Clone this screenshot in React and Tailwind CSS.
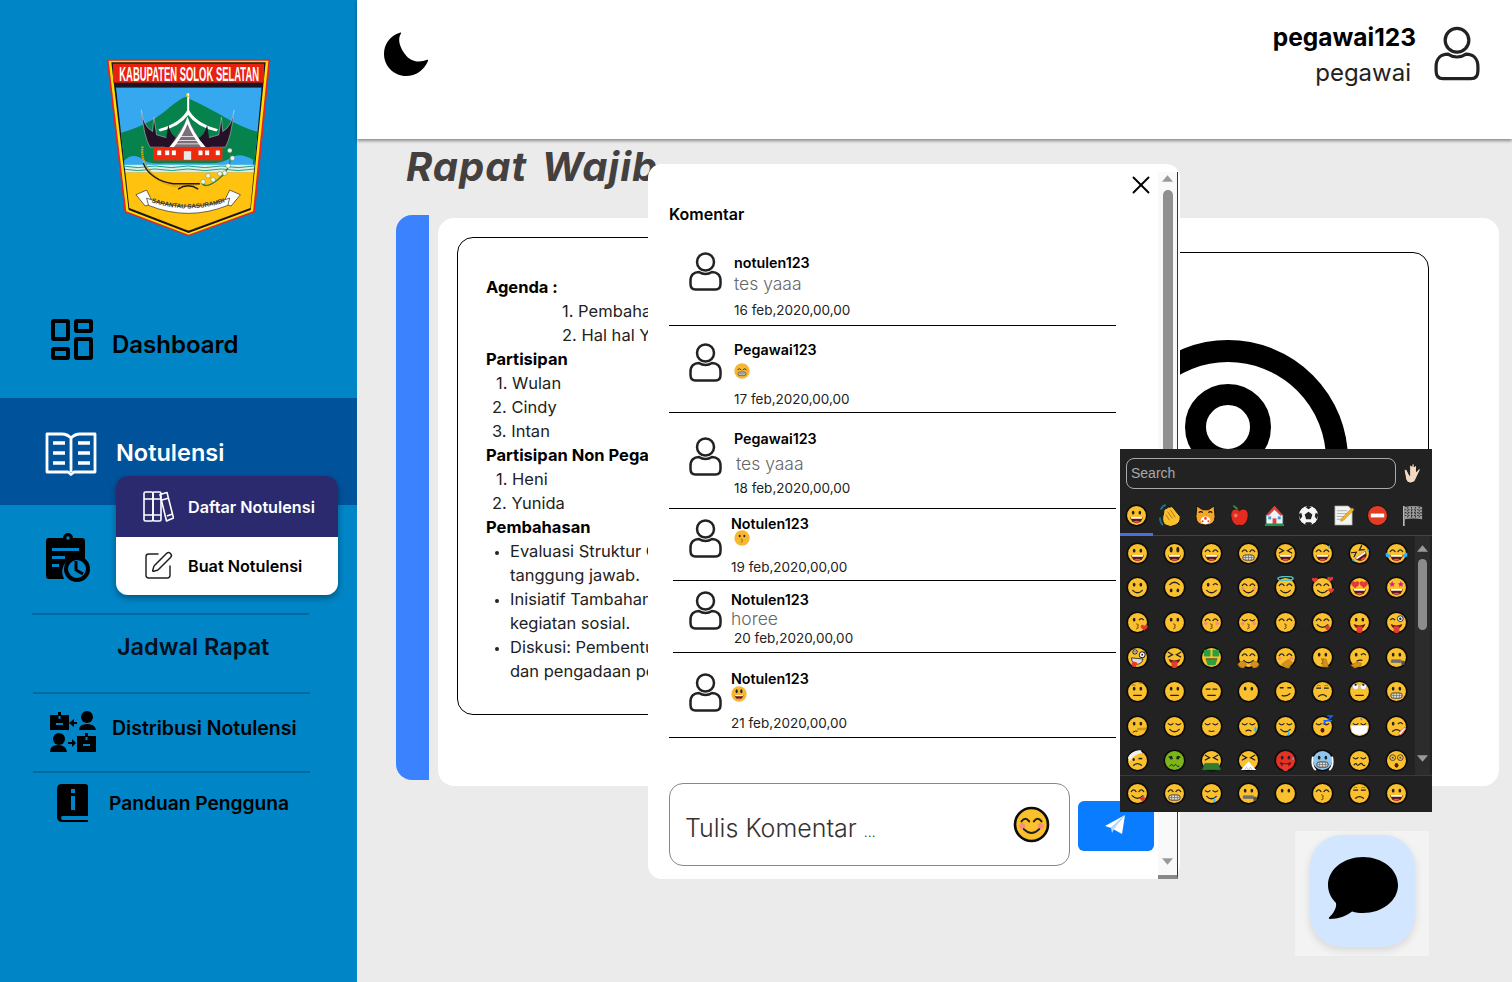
import { SquarePen, X } from "lucide-react";

/* ---------- emoji drawings ---------- */
const Dots = () => (
  <>
    <ellipse cx="8.5" cy="9" rx="1.4" ry="2" fill="#222" />
    <ellipse cx="15.5" cy="9" rx="1.4" ry="2" fill="#222" />
  </>
);
const BigEyes = () => (
  <>
    <ellipse cx="8.5" cy="8" rx="1.6" ry="3" fill="#222" />
    <ellipse cx="15.5" cy="8" rx="1.6" ry="3" fill="#222" />
  </>
);
const Arcs = () => (
  <path d="M5.5 10q2.5-3.5 5 0M13.5 10q2.5-3.5 5 0" fill="none" stroke="#222" strokeWidth="1.3" strokeLinecap="round" />
);
const Lids = () => (
  <path d="M5.5 9q2.5 2.5 5 0M13.5 9q2.5 2.5 5 0" fill="none" stroke="#222" strokeWidth="1.2" strokeLinecap="round" />
);
const XEyes = () => (
  <path d="M5.5 6.5l4.5 2.5-4.5 2.5M18.5 6.5L14 9l4.5 2.5" fill="none" stroke="#222" strokeWidth="1.3" strokeLinecap="round" />
);
const Open = () => (
  <>
    <path d="M5.5 13.5h13a6.5 6.5 0 0 1-13 0z" fill="#5c1616" />
    <path d="M6 13.5h12l-.5 2h-11z" fill="#fff" />
    <path d="M8.5 18.5q3.5-2 7 0q-3.5 2-7 0z" fill="#ef5350" />
  </>
);
const Smile = () => <path d="M7 15q5 5 10 0" fill="none" stroke="#222" strokeWidth="1.3" strokeLinecap="round" />;
const Flat = () => <path d="M8 16h8" stroke="#222" strokeWidth="1.3" strokeLinecap="round" />;
const Frown = () => <path d="M8 17q4-3.5 8 0" fill="none" stroke="#222" strokeWidth="1.3" strokeLinecap="round" />;
const Teeth = () => (
  <>
    <rect x="6" y="13.5" width="12" height="5.5" rx="2.7" fill="#ddd" stroke="#333" strokeWidth=".9" />
    <path d="M6.5 16.2h11M9 13.5v5.5M12 13.5v5.5M15 13.5v5.5" stroke="#555" strokeWidth=".6" />
  </>
);
const Kiss = () => (
  <path d="M11 13.5q3 .8 1 2.4q2 1.4-1 2.6" fill="none" stroke="#8a5a10" strokeWidth="1.2" strokeLinecap="round" />
);
const Blush = () => (
  <>
    <circle cx="6" cy="13" r="1.9" fill="#f48f7b" />
    <circle cx="18" cy="13" r="1.9" fill="#f48f7b" />
  </>
);
const Tongue = () => (
  <>
    <path d="M6 13.5q6 3 12 0q-1 5-6 5t-6-5z" fill="#5c1616" />
    <path d="M9 16h6v4a3 3 0 0 1-6 0z" fill="#e53935" />
  </>
);
const Wink = () => (
  <>
    <ellipse cx="8.5" cy="9" rx="1.4" ry="2" fill="#222" />
    <path d="M13.5 9.5q2.5-3 5 0" fill="none" stroke="#222" strokeWidth="1.3" />
  </>
);
const Hand = ({ d = "M6 22q-2-5 3-6l6-1q5 0 4 4l-3 4z" }) => <path d={d} fill="#d58f1c" stroke="#a86c10" strokeWidth=".6" />;
const Drop = ({ x = 19, y = 6 }) => <path d={`M${x} ${y}q2 2.6 0 3.8q-2-1.2 0-3.8z`} fill="#29b6f6" />;
const Heart = ({ x, y, c = "#e53935", s = 1 }) => (
  <path
    transform={`translate(${x} ${y}) scale(${s})`}
    d="M0-1.2C-1-3-3.6-2-3-.2C-2.6 1-1 2 0 3C1 2 2.6 1 3-.2C3.6-2 1-3 0-1.2z"
    fill={c}
  />
);
const Star = ({ x, y }) => <path transform={`translate(${x} ${y})`} d="M0-3.2L1-1 3.2-.8 1.4.8 2 3 0 1.8-2 3-1.4.8-3.2-.8-1-1z" fill="#d81b9a" />;
const Zip = () => (
  <>
    <rect x="6" y="14" width="12" height="3.6" rx="1" fill="#888" />
    <path d="M7.5 14v3.6M9.5 14v3.6M11.5 14v3.6M13.5 14v3.6M15.5 14v3.6" stroke="#333" strokeWidth=".6" />
    <rect x="17" y="15.5" width="3.5" height="4" fill="#555" />
  </>
);

const faces = {
  grin: <><Dots /><Open /></>,
  smiley: <><BigEyes /><Open /></>,
  smile: <><Arcs /><Open /></>,
  beam: <><Arcs /><Teeth /></>,
  laugh: <><XEyes /><Open /></>,
  sweat: <><Arcs /><Open /><Drop x={19} y={3} /></>,
  rofl: <g transform="rotate(-35 12 12)"><XEyes /><Open /><path d="M2 12q-1 3 1 4q2-2-1-4zM22 12q1 3-1 4q-2-2 1-4z" fill="#29b6f6" /></g>,
  joy: <><Arcs /><Open /><path d="M1 11q-1.5 5 3 5q2-1 1-3zM23 11q1.5 5-3 5q-2-1-1-3z" fill="#29b6f6" /></>,
  slight: <><Dots /><Smile /></>,
  upside: <g transform="rotate(180 12 12)"><Dots /><Smile /></g>,
  wink: <><Wink /><Smile /></>,
  blush: <><Arcs /><Blush /><Smile /></>,
  halo: <><Arcs /><Smile /><ellipse cx="12" cy="2.5" rx="8" ry="2" fill="none" stroke="#4fc3c7" strokeWidth="1.4" /></>,
  hearts: <><Arcs /><Smile /><Heart x={4} y={4} /><Heart x={20} y={3} /><Heart x={21} y={15} /></>,
  hearteyes: <><Heart x={7.5} y={8.5} s={1.4} /><Heart x={16.5} y={8.5} s={1.4} /><Open /></>,
  stars: <><Star x={7.5} y={8.5} /><Star x={16.5} y={8.5} /><Open /></>,
  kissheart: <><Wink /><Kiss /><Heart x={19} y={17} s={1.2} /></>,
  kiss: <><Dots /><Kiss /></>,
  kissblush: <><Arcs /><Blush /><Kiss /></>,
  kissclosed: <><Lids /><Blush /><Kiss /></>,
  kissarc: <><Arcs /><Kiss /></>,
  yum: <><Arcs /><path d="M6 14q6 6 12 0" fill="none" stroke="#222" strokeWidth="1.3" /><path d="M14 17l5-2.5 1 4-3 2z" fill="#e53935" /></>,
  tongue: <><Dots /><Tongue /></>,
  winktongue: <><path d="M5.5 9.5q2.5-3 5 0" fill="none" stroke="#222" strokeWidth="1.3" /><circle cx="16" cy="8" r="3" fill="#fff" stroke="#222" /><circle cx="16" cy="8" r="1.3" fill="#222" /><Tongue /></>,
  zany: <g transform="rotate(15 12 12)"><circle cx="8" cy="7" r="2.2" fill="#fff" stroke="#222" /><circle cx="16" cy="8" r="3" fill="#fff" stroke="#222" /><circle cx="16" cy="8" r="1" fill="#222" /><circle cx="8" cy="7" r=".8" fill="#222" /><path d="M6 14l12-2q0 6-5 7t-7-5z" fill="#ddd" stroke="#222" strokeWidth=".8" /><path d="M8 17h5v3a2.5 2.5 0 0 1-5 0z" fill="#e53935" /></g>,
  squint: <><XEyes /><Tongue /></>,
  money: <><rect x="4" y="4" width="7" height="7" rx="1" fill="#2e9e3a" /><rect x="13" y="4" width="7" height="7" rx="1" fill="#2e9e3a" /><path d="M6 14h12l-2 6H8z" fill="#2e9e3a" /><path d="M6 13.5h12" stroke="#222" /></>,
  hug: <><Arcs /><Smile /><Hand d="M1 19q2-4 6-3l3 3-3 4q-5 0-6-4zM23 19q-2-4-6-3l-3 3 3 4q5 0 6-4z" /></>,
  shy: <><Arcs /><Blush /><Hand d="M8 19l7-5 4 3-3 6q-5 1-8-4z" /></>,
  shush: <><Dots /><Kiss /><Hand d="M12 22l1-9 3 1 2 8z" /></>,
  think: <><Wink /><path d="M9 16q3-2 6-1" fill="none" stroke="#222" strokeWidth="1.2" /><Hand d="M3 20l6-3 5 1-1 3-6 2z" /></>,
  zip: <><Dots /><Zip /></>,
  brow: <><Dots /><path d="M6 5.5q2-1 4 0M14 3.5q2-1 4 0" fill="none" stroke="#a86c10" /><Flat /></>,
  neutral: <><Dots /><Flat /></>,
  blank: <><path d="M6 9.5h5M13 9.5h5" stroke="#222" strokeWidth="1.4" /><Flat /></>,
  nomouth: <Dots />,
  smirk: <><path d="M6 8h4M14 8h4" stroke="#222" strokeWidth="1.6" /><path d="M8 16q5 2 9-2" fill="none" stroke="#222" strokeWidth="1.3" /></>,
  unamused: <><path d="M5.5 8.5h5M13.5 8.5h5" stroke="#222" strokeWidth="1.4" /><path d="M6 6q2-1 4 0M14 6q2-1 4 0" fill="none" stroke="#a86c10" /><Frown /></>,
  roll: <><circle cx="8" cy="7" r="3.2" fill="#fff" stroke="#999" strokeWidth=".5" /><circle cx="16" cy="7" r="3.2" fill="#fff" stroke="#999" strokeWidth=".5" /><circle cx="8" cy="5" r="1.2" fill="#222" /><circle cx="16" cy="5" r="1.2" fill="#222" /><Flat /></>,
  grimace: <><Dots /><Teeth /></>,
  lying: <><Dots /><path d="M12 14l9-.5-1 2-8 0z" fill="#e6a21f" stroke="#a86c10" strokeWidth=".5" /><path d="M7 18q3-2 5-1" fill="none" stroke="#222" /></>,
  relieved: <><Lids /><Smile /></>,
  pensive: <><Lids /><path d="M9 16.5q3 1.5 6 0" fill="none" stroke="#222" strokeWidth="1.2" /></>,
  sleepy: <><Lids /><path d="M9 17q3-2.5 6 0" fill="none" stroke="#222" strokeWidth="1.2" /><path d="M19 12q3 4 .5 6q-3-2-.5-6z" fill="#29b6f6" /></>,
  drool: <><Lids /><Smile /><path d="M15 16q2 4 .5 6q-2-2-.5-6z" fill="#29b6f6" /></>,
  sleep: <><Lids /><ellipse cx="12" cy="16" rx="2" ry="2.4" fill="#5c1616" /><path d="M13 6h3l-3 3h3M17 1h5l-5 5h5" fill="none" stroke="#1e63ff" strokeWidth="1.4" /></>,
  mask: <><Lids /><path d="M3 11h18l-1 7q-4 3-8 3t-8-3z" fill="#fff" stroke="#ccc" strokeWidth=".5" /><Drop x={14} y={2} /></>,
  thermo: <><Wink /><Frown /><path d="M14 19l6-6 2 1-6 7z" fill="#eee" stroke="#e53935" strokeWidth=".7" /></>,
  bandage: <><path d="M2 9Q5 2 15 1l2 3Q8 6 4 13z" fill="#eee" /><path d="M13 10h4" stroke="#222" strokeWidth="1.6" /><ellipse cx="8" cy="11" rx="1.2" ry="1.6" fill="#222" /><Frown /></>,
  sick: <><path d="M6 8l4 2M18 8l-4 2" stroke="#222" strokeWidth="1.3" /><Dots /><path d="M7 18q1.5-3 3-1t2 0t2 0t3 1" fill="none" stroke="#222" /></>,
  vomit: <><XEyes /><path d="M5 15h14l3 7H2z" fill="#2e7d32" stroke="#1b4d1e" strokeWidth=".5" /></>,
  sneeze: <><XEyes /><path d="M12 13l8 9H4z" fill="#fff" /><path d="M8 22l2-3 2 3 2-3 2 3" stroke="#999" fill="none" strokeWidth=".6" /></>,
  hot: <><Dots /><Tongue /><Drop x={20} y={8} /></>,
  cold: <><Dots /><Teeth /><path d="M2 8q-2 10 3 14M22 8q2 10-3 14" fill="none" stroke="#fff" strokeWidth="2" /></>,
  woozy: <><Lids /><path d="M6 17q2-3 3-1t3 0t3 0t3 1" fill="none" stroke="#222" strokeWidth="1.2" /></>,
  dizzy: <><circle cx="8" cy="9" r="3" fill="none" stroke="#444" /><circle cx="16" cy="9" r="3" fill="none" stroke="#444" /><circle cx="8" cy="9" r="1" fill="#444" /><circle cx="16" cy="9" r="1" fill="#444" /><ellipse cx="12" cy="17" rx="2" ry="2.5" fill="#5c1616" /></>,
};

const fills = { sick: "#7cb518", hot: "#e53222", cold: "#8ec6ee" };

function Emoji({ name, size = "w-[23px] h-[23px]", plain = false }) {
  return (
    <svg viewBox="0 0 24 24" className={size}>
      <circle
        cx="12"
        cy="12"
        r={plain ? 11.5 : 10.7}
        fill={plain ? "#f7b733" : fills[name] || "#fbc02d"}
        stroke={plain ? "none" : "#0c0c0c"}
        strokeWidth="1.7"
      />
      {faces[name]}
    </svg>
  );
}

const tabIcons = {
  wave: (
    <>
      <path d="M22 13L14 3q-1.500-1-2.500.5l-1-.5q-1.500 0-2 1.500q-2-.5-2.500 1.500q-1.500.5-1 2.500L4 13q-1 6 3 9q5 3 10 0q6-3 5-9z" fill="#fbc02d" stroke="#111" strokeWidth="1" />
      <path d="M9 8l5 7M12 6l5 8M7 11l4 6" stroke="#a86c10" strokeWidth=".9" />
      <path d="M1 14q0 5 3 8M7 1Q3 2 2 6" fill="none" stroke="#1c6f86" strokeWidth="2" />
    </>
  ),
  cat: (
    <>
      <path d="M3 2l6 4h6l6-4 1 11q0 9-10 9T2 13z" fill="#f5a623" stroke="#111" strokeWidth="1" />
      <path d="M5 9q2-2 4 0M15 9q2-2 4 0" fill="none" stroke="#111" strokeWidth="1.3" />
      <ellipse cx="12" cy="17" rx="5" ry="4" fill="#fff" />
      <circle cx="12" cy="15" r="1.4" fill="#e53935" />
      <circle cx="9" cy="18" r="1" fill="#e53935" />
      <circle cx="15" cy="18" r="1" fill="#e53935" />
    </>
  ),
  apple: (
    <>
      <path d="M12 7C8 3 2 6 3 13q1 7 5 9q2 1 4 0q2 1 4 0q4-2 5-9C22 6 16 3 12 7z" fill="#e32b20" stroke="#111" strokeWidth=".8" />
      <path d="M11 6Q9 2 5 1q1 4 6 5z" fill="#2e9e3a" />
      <circle cx="8" cy="12" r="2" fill="#f27066" />
    </>
  ),
  house: (
    <>
      <path d="M12 2L3 12v9h18v-9z" fill="#eef3f6" stroke="#0b3d2c" strokeWidth="1" />
      <path d="M12 2L3 12h3l6-6 6 6h3z" fill="#e3403a" />
      <rect x="10" y="15" width="4" height="6" fill="#e3403a" />
      <rect x="5.5" y="13" width="3" height="3" fill="#3a9ce0" />
      <rect x="15.5" y="13" width="3" height="3" fill="#3a9ce0" />
      <rect x="2" y="21" width="20" height="2" fill="#1f9a4a" />
    </>
  ),
  soccer: (
    <>
      <circle cx="12" cy="12" r="10.5" fill="#f5f5f5" stroke="#111" strokeWidth="1" />
      <path d="M12 8l4 3-1.5 5h-5L8 11z" fill="#222" />
      <path d="M12 1.5l-3 2 3 2 3-2zM1.5 11l2 5 2-3-1-4zM22.500 11l-2 5-2-3 1-4zM8 21l4 1.500 4-1.500-1.500-2h-5z" fill="#222" />
    </>
  ),
  memo: (
    <>
      <path d="M3 2h14l4 4v16H3z" fill="#f4f4ee" stroke="#999" strokeWidth=".7" />
      <path d="M5 7h11M5 10h13M5 13h9M5 16h7" stroke="#9ab" strokeWidth=".9" />
      <path d="M21 4l2 2-11 11-3 1 1-3z" fill="#f5b324" stroke="#a86c10" strokeWidth=".5" />
    </>
  ),
  noentry: (
    <>
      <circle cx="12" cy="12" r="10.5" fill="#e23c25" stroke="#111" strokeWidth="1" />
      <rect x="5" y="10" width="14" height="4" fill="#fff" />
    </>
  ),
  flag: (
    <>
      <path d="M3 2v21" stroke="#ddd" strokeWidth="1.4" />
      <path d="M4 3q9-2 18 0v13q-9-2-18 0z" fill="#9a9a9a" />
      <path d="M4 6h18M4 9h18M4 12h18M7 3v13M11 3v13M15 3v13M19 3v13" stroke="#333" strokeWidth="1.1" strokeDasharray="1.6 1.6" />
    </>
  ),
  hand: (
    <>
      <path d="M6 8l3 6V4.500a1.200 1.200 0 0 1 2.400 0V3a1.200 1.200 0 0 1 2.400 0v2a1.200 1.200 0 0 1 2.400 0v5l2-2.500c1-1 2.400 0 1.600 1.300L15 19q-2 3-5 3q-4 0-5-4L3.400 9.500C3 8 5 7 6 8z" fill="#f4d9c2" stroke="#111" strokeWidth=".9" />
    </>
  ),
};

const TabIcon = ({ name, size = "w-[23px] h-[23px]" }) => (
  <svg viewBox="0 0 24 24" className={size}>
    {tabIcons[name]}
  </svg>
);

const gridEmoji = [
  "grin", "smiley", "smile", "beam", "laugh", "sweat", "rofl", "joy",
  "slight", "upside", "wink", "blush", "halo", "hearts", "hearteyes", "stars",
  "kissheart", "kiss", "kissblush", "kissclosed", "kissarc", "yum", "tongue", "winktongue",
  "zany", "squint", "money", "hug", "shy", "shush", "think", "zip",
  "brow", "neutral", "blank", "nomouth", "smirk", "unamused", "roll", "grimace",
  "lying", "relieved", "pensive", "sleepy", "drool", "sleep", "mask", "thermo",
  "bandage", "sick", "vomit", "sneeze", "hot", "cold", "woozy", "dizzy",
];
const lastRow = ["yum", "beam", "drool", "zip", "nomouth", "kissarc", "unamused", "grin"];

/* ---------- icons ---------- */
function Avatar({ className, stroke = 2.5 }) {
  return (
    <svg viewBox="0 0 33 39" fill="none" stroke="#222" strokeWidth={stroke} className={className}>
      <circle cx="16.5" cy="10" r="8.5" />
      <path d="M10 20C5 20 1.500 23 1.500 29v3c0 4 2 5.500 5 5.500h20c3 0 5-1.500 5-5.500v-3c0-6-3.500-9-8.500-9q-3 2-6.500 2T10 20z" />
    </svg>
  );
}

function Logo() {
  return (
    <svg viewBox="318 87 496 535" className="w-[165px] h-[178px]">
      <defs>
        <clipPath id="inner">
          <path d="M348 172H786L752 535 566 603 388 535z" />
        </clipPath>
        <path id="rib" d="M440 512Q565 560 690 512" />
      </defs>
      <path d="M320 88H812L766 548 566 620 374 548z" fill="#e3262b" />
      <path d="M326 92H806L760 545 566 615 379 545z" fill="#ffe000" />
      <path d="M334 97H798L753 541 566 610 386 541z" fill="#1b1523" />
      <rect x="339" y="101" width="454" height="57" fill="#e8210e" />
      <text x="358" y="154" textLength="420" lengthAdjust="spacingAndGlyphs" fontSize="58" fontWeight="700" fill="#fff" fontFamily="'Liberation Sans',sans-serif">
        KABUPATEN SOLOK SELATAN
      </text>
      <g clipPath="url(#inner)">
        <rect x="340" y="172" width="450" height="240" fill="#35a8f0" />
        <path d="M340 315Q440 290 500 240T565 205Q620 230 680 265T790 310V420H340z" fill="#06824d" />
        <path d="M370 395q30-30 60-5q20 15 60 10h140q40 0 60-15q30-20 70 5v30H370z" fill="#35a8f0" />
        <rect x="340" y="405" width="450" height="24" fill="#d8efe2" />
        <path d="M340 411q25-5 50 0t50 0 50 0 50 0 50 0 50 0 50 0 50 0 50 0M340 420q25-5 50 0t50 0 50 0 50 0 50 0 50 0 50 0 50 0 50 0" fill="none" stroke="#1f9f8e" strokeWidth="3" />
        <rect x="340" y="428" width="450" height="190" fill="#ffc20e" />
      </g>
      <path d="M565 190v50" stroke="#fff" strokeWidth="6" />
      <path d="M475 298Q545 280 565 235Q585 280 655 298L650 305Q590 290 565 255Q540 290 480 305z" fill="#fff" />
      <path d="M562 190a6 6 0 1 0 8 6a5 5 0 0 1-8-6z" fill="#e8c020" />
      <path d="M424 240Q432 320 450 352H515L505 325 470 315 462 262 458 305Q430 290 424 240z" fill="#251027" stroke="#d8d8d8" strokeWidth="1.5" />
      <path d="M703 240Q695 320 677 352H612L622 325 657 315 665 262 669 305Q697 290 703 240z" fill="#251027" stroke="#d8d8d8" strokeWidth="1.5" />
      <path d="M505 285q8 35 30 40l-15 27h-25z" fill="#251027" />
      <path d="M622 285q-8 35-30 40l15 27h25z" fill="#251027" />
      <path d="M563 265L612 352H510z" fill="#7a6f78" />
      <path d="M535 320h56M528 332h70M522 342h82" stroke="#ddd" strokeWidth="3" />
      <path d="M563 260q-15 50-55 92h14q30-40 41-70q11 30 41 70h14q-40-42-55-92z" fill="#fff" />
      <rect x="460" y="352" width="208" height="40" fill="#ee2a0e" />
      {[472, 496, 516, 596, 616, 648].map((x) => (
        <rect key={x} x={x} y="362" width="12" height="14" fill="#fff" />
      ))}
      <rect x="552" y="364" width="22" height="26" fill="#e8e8e8" />
      <path d="M428 350Q420 405 470 445T600 460" fill="none" stroke="#d9a515" strokeWidth="7" strokeDasharray="5 2" />
      <path d="M430 400Q450 450 520 462H600" fill="none" stroke="#231a14" strokeWidth="4" />
      <path d="M535 478q30-20 60 0" fill="none" stroke="#231a14" strokeWidth="4" />
      <path d="M690 360q10 50-30 85t-55 15" fill="none" stroke="#2d8040" strokeWidth="4" />
      {[[690, 362], [698, 385], [685, 408], [660, 432], [625, 438], [640, 450], [610, 456], [675, 430]].map(([x, y]) => (
        <circle key={x + y} cx={x} cy={y} r="7" fill="#eef5e8" stroke="#2d6040" strokeWidth="1" />
      ))}
      <path d="M408 495l32-14 20 40-24 8zM722 495l-32-14-20 40 24 8z" fill="#fff" stroke="#222" strokeWidth="2" />
      <path d="M440 505Q565 555 690 505l-6 22Q565 575 446 527z" fill="#fff" stroke="#222" strokeWidth="2" />
      <text fontSize="19" fill="#333" fontFamily="'Liberation Sans',sans-serif" fontWeight="700">
        <textPath href="#rib" startOffset="6%" textLength="225">
          SARANTAU SASURAMBI
        </textPath>
      </text>
    </svg>
  );
}

const DashboardIcon = () => (
  <svg viewBox="0 0 42 41" className="w-[42px] h-[41px] mb-[13px]" fill="none" stroke="#000" strokeWidth="4" strokeLinejoin="round">
    <rect x="2" y="2" width="15" height="18" rx="1" />
    <rect x="25" y="2" width="15" height="10" rx="1" />
    <rect x="2" y="30" width="15" height="9" rx="1" />
    <rect x="25" y="20" width="15" height="19" rx="1" />
  </svg>
);

const BookIcon = () => (
  <svg viewBox="0 0 52 44" className="w-[52px] h-[44px]" fill="none" stroke="#fff" strokeWidth="2.800" strokeLinejoin="round">
    <path d="M26 6Q22 2 17 2H2v38h21l3 2.500 3-2.500h21V2H35q-5 0-9 4zM26 6v34" />
    <path d="M8 11h12M8 21h12M8 31h12M33 11h12M33 21h12M33 31h12" strokeWidth="3.400" />
  </svg>
);

const BooksIcon = () => (
  <svg viewBox="0 0 31 32" className="w-[31px] h-[32px]" fill="none" stroke="#fff" strokeWidth="1.600" strokeLinejoin="round">
    <rect x="1" y="1" width="9" height="29" rx="1.500" />
    <rect x="10" y="1" width="8" height="29" rx="1.500" />
    <path d="M1 8h17M1 24h17" />
    <path d="M17 3.500 24 1.500 30.500 27l-7 3z" />
    <path d="M19 9l7-2M24 25l5.500-2" />
  </svg>
);

const CalendarClock = () => (
  <svg viewBox="0 0 44 49" className="w-[44px] h-[49px]">
    <path d="M6 5h11a5 5 0 0 1 10 0h9q3 0 3 3v18a15 15 0 0 0-21 20H3q-3 0-3-3V8q0-3 3-3z" fill="#000" />
    <circle cx="22" cy="5" r="1.800" fill="#0085c6" />
    <path d="M6 15h27v3H6zM6 23h13v3H6zM6 31h7v3H6z" fill="#0085c6" />
    <circle cx="31" cy="36" r="11" fill="none" stroke="#000" strokeWidth="4" />
    <path d="M30 28v9l7 4" fill="none" stroke="#000" strokeWidth="3" />
  </svg>
);

const DistribusiIcon = () => (
  <svg viewBox="0 0 46 41" className="w-[46px] h-[41px] mt-[-3px]">
    <path d="M0 4h8V1h3v3h8v15H0z" />
    <rect x="6" y="12" width="7" height="2" fill="#0085c6" />
    <rect x="8.500" y="5" width="2" height="3" fill="#0085c6" />
    <path d="M27 25h8v-3h3v3h8v16H27z" />
    <rect x="33" y="33" width="7" height="2" fill="#0085c6" />
    <rect x="35.500" y="26" width="2" height="3" fill="#0085c6" />
    <circle cx="37" cy="6" r="6" />
    <path d="M29 19q0-6 8-6t9 6z" />
    <circle cx="9" cy="28" r="6" />
    <path d="M0 41q0-7 8-7t9 7z" />
    <path d="M27 11h-3V8l-5 4 5 4v-3h3zM18 31h4v-3l4 4-4 4v-3h-4z" />
  </svg>
);

const GuideIcon = () => (
  <svg viewBox="0 0 31 38" className="w-[31px] h-[38px]">
    <path d="M5 0h23q3 0 3 3v29H6q-2 0-2 2t2 2h25v2H6q-6 0-6-5V5q0-5 5-5z" />
    <rect x="14" y="12" width="4" height="14" fill="#0085c6" />
    <rect x="14" y="5" width="4" height="4" fill="#0085c6" />
  </svg>
);

const Tri = ({ up, color = "#9a9a9a" }) => (
  <svg viewBox="0 0 10 6" className="w-[11px] h-[7px]">
    <path d={up ? "M5 0l5 6H0z" : "M0 0h10L5 6z"} fill={color} />
  </svg>
);

/* ---------- comments ---------- */
const commentClass = "text-[14.300px] font-semibold text-black leading-[20px] h-[20px]";
const dateClass = "text-[13.500px] text-[#222] leading-[20px] h-[20px]";
const msgClass = "text-[17.500px] font-light text-[#666] leading-[22px] h-[22px]";

function Comments() {
  return (
    <div className="w-[447px]">
      <div className="flex h-[86px] border-b border-black">
        <Avatar className="w-[33px] h-[39px] ml-[20px] mt-[12px]" />
        <div className="ml-[12px]">
          <div className={`${commentClass} mt-[13px]`}>notulen123</div>
          <div className={msgClass}>tes yaaa</div>
          <div className={`${dateClass} mt-[5px]`}>16 feb,2020,00,00</div>
        </div>
      </div>
      <div className="flex h-[87px] border-b border-black">
        <Avatar className="w-[33px] h-[39px] ml-[20px] mt-[17px]" />
        <div className="ml-[12px]">
          <div className={`${commentClass} mt-[14px]`}>Pegawai123</div>
          <div className={`${msgClass} flex items-center`}>
            <Emoji name="beam" plain size="w-[16px] h-[16px]" />
          </div>
          <div className={`${dateClass} mt-[7px]`}>17 feb,2020,00,00</div>
        </div>
      </div>
      <div className="flex h-[96px] border-b border-black">
        <Avatar className="w-[33px] h-[39px] ml-[20px] mt-[24px]" />
        <div className="ml-[12px]">
          <div className={`${commentClass} mt-[16px]`}>Pegawai123</div>
          <div className={`${msgClass} mt-[4px] ml-[2px]`}>tes yaaa</div>
          <div className={`${dateClass} mt-[3px]`}>18 feb,2020,00,00</div>
        </div>
      </div>
      <div className="flex h-[72px] ml-[4px] border-b border-black">
        <Avatar className="w-[33px] h-[39px] ml-[16px] mt-[10px]" />
        <div className="ml-[9px]">
          <div className={`${commentClass} mt-[5px]`}>Notulen123</div>
          <div className={`${msgClass} -mt-[7px] ml-[3px] flex items-center`}>
            <Emoji name="kiss" plain size="w-[16px] h-[16px]" />
          </div>
          <div className={`${dateClass} mt-[8px]`}>19 feb,2020,00,00</div>
        </div>
      </div>
      <div className="flex h-[72px] ml-[4px] border-b border-black">
        <Avatar className="w-[33px] h-[39px] ml-[16px] mt-[10px]" />
        <div className="ml-[9px]">
          <div className={`${commentClass} mt-[9px]`}>Notulen123</div>
          <div className={`${msgClass} -mt-[2px]`}>horee</div>
          <div className={`${dateClass} -mt-[2px] ml-[3px]`}>20 feb,2020,00,00</div>
        </div>
      </div>
      <div className="flex h-[85px] border-b border-black">
        <Avatar className="w-[33px] h-[39px] ml-[20px] mt-[20px]" />
        <div className="ml-[9px]">
          <div className={`${commentClass} mt-[16px]`}>Notulen123</div>
          <div className={`${msgClass} -mt-[6px] flex items-center`}>
            <Emoji name="smiley" plain size="w-[16px] h-[16px]" />
          </div>
          <div className={`${dateClass} mt-[8px]`}>21 feb,2020,00,00</div>
        </div>
      </div>
    </div>
  );
}

function CommentModal() {
  return (
    <div className="absolute left-[648px] top-[164px] w-[532px] h-[715px] bg-white rounded-[14px] flex z-20">
      <div className="w-[510px] pl-[21px] pt-[40px]">
        <div className="text-[16px] font-semibold leading-[20px] mb-[16px] text-black">Komentar</div>
        <Comments />
        <div className="flex gap-[8px] mt-[45px]">
          <div className="w-[401px] h-[83px] border border-[#888] rounded-[14px] flex items-center justify-between pl-[15px] pr-[19px]">
            <span className="text-[25px] font-light text-[#333] mt-[8px]">
              Tulis Komentar <span className="text-[14px]">...</span>
            </span>
            <Emoji name="blush" size="w-[37px] h-[37px]" />
          </div>
          <button className="w-[76px] h-[50px] mt-[18px] bg-[#0a7cff] rounded-[6px] flex items-center justify-center">
            <svg viewBox="0 0 22 22" className="w-[22px] h-[22px] mt-[-2px] mr-[2px]">
              <path d="M21 1L1 12l6 2z" fill="#fff" />
              <path d="M21 1L9 15l9 5z" fill="#fff" />
              <path d="M21 1L7 14l1 5 2-4z" fill="#bcdcff" />
            </svg>
          </button>
        </div>
      </div>
      <div className="w-[20px] h-[707px] mt-[8px] bg-[#f9f9f9] border-r border-[#333] border-b-[4px] border-b-[#888] flex flex-col items-center">
        <div className="mt-[3px]"><Tri up /></div>
        <div className="w-[10px] h-[610px] mt-[8px] bg-[#909090] rounded-t-[5px]" />
        <div className="mt-[58px]"><Tri /></div>
      </div>
      <div className="absolute left-[478px] top-[6px]">
        <X size={30} strokeWidth={1.500} color="#000" />
      </div>
    </div>
  );
}

function EmojiPicker() {
  const tabs = ["grin", "wave", "cat", "apple", "house", "soccer", "memo", "noentry", "flag"];
  return (
    <div className="absolute left-[1120px] top-[449px] w-[312px] h-[363px] bg-[#222] flex flex-col z-30 font-['Liberation_Sans',sans-serif]">
      <div className="flex items-center pl-[6px] pt-[9px] shrink-0">
        <div className="w-[270px] h-[31px] border border-[#aaa] rounded-[8px] flex items-center px-[4px] text-[14px] text-[#a8a8a8]">
          Search
        </div>
        <div className="ml-[5px]"><TabIcon name="hand" /></div>
      </div>
      <div className="flex h-[44px] pt-[15px] -ml-[1px] shrink-0">
        {tabs.map((t, i) => (
          <div key={t} className="w-[34.500px] flex justify-center">
            {i === 0 ? <Emoji name={t} /> : <TabIcon name={t} />}
          </div>
        ))}
      </div>
      <div className="flex h-[3px] shrink-0">
        <div className="w-[33px] bg-[#4a6fe0]" />
        <div className="flex-1 border-b border-[#444]" />
      </div>
      <div className="flex h-[240px] border-b border-[#3a3a3a] shrink-0">
        <div className="w-[295px] h-[239px] overflow-hidden">
          <div className="grid grid-cols-[repeat(8,37px)] auto-rows-[34.600px] -ml-[1px]">
            {gridEmoji.map((n, i) => (
              <div key={i} className="flex items-center justify-center">
                <Emoji name={n} />
              </div>
            ))}
          </div>
        </div>
        <div className="w-[15px] bg-[#2c2c2c] flex flex-col items-center">
          <div className="mt-[9px]"><Tri up /></div>
          <div className="w-[9px] h-[71px] mt-[7px] bg-[#8c8c8c] rounded-[5px]" />
          <div className="mt-[125px]"><Tri /></div>
        </div>
      </div>
      <div className="grid grid-cols-[repeat(8,37px)] h-[35px] -ml-[1px]">
        {lastRow.map((n, i) => (
          <div key={i} className="flex items-center justify-center">
            <Emoji name={n} />
          </div>
        ))}
      </div>
    </div>
  );
}

function Sidebar() {
  const hr = "h-[2px] bg-[#00699e]";
  return (
    <aside className="w-[357px] shrink-0 bg-[#0085c6] relative flex flex-col text-[#04101c]">
      <div className="h-[293px] pt-[59px] pl-[106px]">
        <Logo />
      </div>
      <div className="h-[105px] flex items-center pl-[51px] gap-[19px] text-black">
        <DashboardIcon />
        <span className="text-[24px] font-semibold mb-[2px]">Dashboard</span>
      </div>
      <div className="h-[107px] bg-[#00529b] flex items-start pt-[34px] pl-[45px] gap-[19px] text-white">
        <BookIcon />
        <span className="text-[23.500px] font-semibold mt-[3px]">Notulensi</span>
      </div>
      <div className="h-[108px] pt-[28px] pl-[46px]">
        <CalendarClock />
      </div>
      <div className={`${hr} ml-[32px] w-[277px]`} />
      <div className="h-[77px] pl-[117px] pt-[14px] text-[23.500px] font-semibold leading-[36px]">Jadwal Rapat</div>
      <div className={`${hr} ml-[33px] w-[277px]`} />
      <div className="h-[77px] pl-[50px] flex items-center gap-[16px] text-black">
        <DistribusiIcon />
        <span className="text-[19.500px] font-semibold mb-[8px]">Distribusi Notulensi</span>
      </div>
      <div className={`${hr} ml-[33px] w-[277px]`} />
      <div className="h-[60px] pl-[57px] flex items-center gap-[21px] text-black">
        <GuideIcon />
        <span className="text-[19.200px] font-semibold">Panduan Pengguna</span>
      </div>

      <div className="absolute left-[116px] top-[476px] w-[222px] rounded-[12px] overflow-hidden shadow-[0_3px_6px_rgba(0,0,0,0.35)]">
        <div className="h-[61px] bg-[#2b2a6f] flex items-center pl-[27px] gap-[14px] text-white">
          <BooksIcon />
          <span className="text-[16.200px] font-semibold mt-[2px]">Daftar Notulensi</span>
        </div>
        <div className="h-[58px] bg-white flex items-center pl-[26px] gap-[14px] text-black">
          <SquarePen size={32} strokeWidth={1.100} color="#222" />
          <span className="text-[16.200px] font-semibold">Buat Notulensi</span>
        </div>
      </div>
    </aside>
  );
}

function MainContent() {
  return (
    <main className="flex-1 bg-[#ebebeb] flex flex-col">
      <header className="h-[139px] bg-white shadow-[0_2px_3px_rgba(0,0,0,0.4)] flex items-start justify-between pl-[27px] pr-[32px] shrink-0 relative z-10">
        <svg viewBox="0 0 44 44" className="w-[44px] h-[44px] mt-[32px]">
          <path d="M16.500.500C5 4 0 13 0 22c0 12 10 22 22 22 10 0 18-6 22-15 .5-1-.5-1.500-1.500-1-5 2-14 3-20-4C16 16 13 8 17 1.500c.3-.8 0-1.200-.5-1z" />
        </svg>
        <div className="flex">
          <div className="flex flex-col items-end mt-[19px]">
            <span className="text-[24.500px] font-bold text-black leading-[36px]">pegawai123</span>
            <span className="text-[24px] text-[#222] leading-[36px] mr-[5px]">pegawai</span>
          </div>
          <Avatar className="w-[46px] h-[55px] ml-[18px] mt-[26px]" stroke={2.300} />
        </div>
      </header>
      <h1 className="ml-[49px] mt-[2px] text-[40px] font-bold italic tracking-[1px] [word-spacing:4px] text-[#444040] leading-[52px]">Rapat Wajib</h1>
      <div className="flex items-start ml-[39px] mt-[22px]">
        <div className="w-[33px] h-[565px] bg-[#3b82ff] rounded-l-[16px]" />
        <div className="ml-[9px] mt-[3px] w-[1061px] h-[568px] bg-white rounded-[16px] flex items-start pl-[19px] pt-[19px]">
          <div className="w-[545px] h-[478px] border border-black rounded-[16px] pl-[28px] pt-[37px] text-[16.500px] leading-[24px] text-[#222] overflow-hidden">
            <div className="font-bold text-black">Agenda :</div>
            <div className="pl-[76px]">1. Pembahasan Rencana Kerja</div>
            <div className="pl-[76px]">2. Hal hal Yang Perlu Dibahas</div>
            <div className="font-bold text-black">Partisipan</div>
            <div className="pl-[10px]">1. Wulan</div>
            <div className="pl-[6px]">2. Cindy</div>
            <div className="pl-[6px]">3. Intan</div>
            <div className="font-bold text-black">Partisipan Non Pegawai</div>
            <div className="pl-[10px]">1. Heni</div>
            <div className="pl-[6px]">2. Yunida</div>
            <div className="font-bold text-black">Pembahasan</div>
            <ul className="list-disc pl-[24px] marker:text-[13px]">
              <li>Evaluasi Struktur Organisasi dan pembagian<br />tanggung jawab.</li>
              <li>Inisiatif Tambahan untuk program kerja dan<br />kegiatan sosial.</li>
              <li>Diskusi: Pembentukan panitia acara tahunan<br />dan pengadaan peralatan kantor.</li>
            </ul>
          </div>
          <div className="w-[402px] h-[416px] ml-[25px] mt-[15px] border border-black rounded-[16px] flex items-center justify-center">
            <svg viewBox="0 0 240 240" className="w-[240px] h-[240px]" fill="none" stroke="#000">
              <circle cx="120" cy="120" r="109" strokeWidth="22" />
              <circle cx="120" cy="87" r="32.500" strokeWidth="21" />
            </svg>
          </div>
        </div>
      </div>
    </main>
  );
}

export default function App() {
  return (
    <div className="relative w-[1512px] h-[982px] overflow-hidden flex font-['Inter',sans-serif]">
      <Sidebar />
      <MainContent />
      <CommentModal />
      <EmojiPicker />
      <div className="absolute left-[1295px] top-[831px] w-[134px] h-[125px] bg-[#f3f3f3] pl-[15px] pt-[4px]">
        <div className="w-[105px] h-[112px] rounded-[32px] bg-[#d2e7ff] shadow-[0_3px_8px_rgba(0,0,0,0.12)] flex items-center justify-center">
          <svg viewBox="0 0 70 62" className="w-[70px] h-[62px] mt-[-6px]">
            <path d="M35 0c19 0 35 12 35 28S54 56 35 56c-4 0-7-.5-11-1.500C19 59 10 62 2 62c-1 0-1.500-1-1-1.500C5 57 9 51 8 46 3 41 0 35 0 28 0 12 16 0 35 0z" />
          </svg>
        </div>
      </div>
    </div>
  );
}
